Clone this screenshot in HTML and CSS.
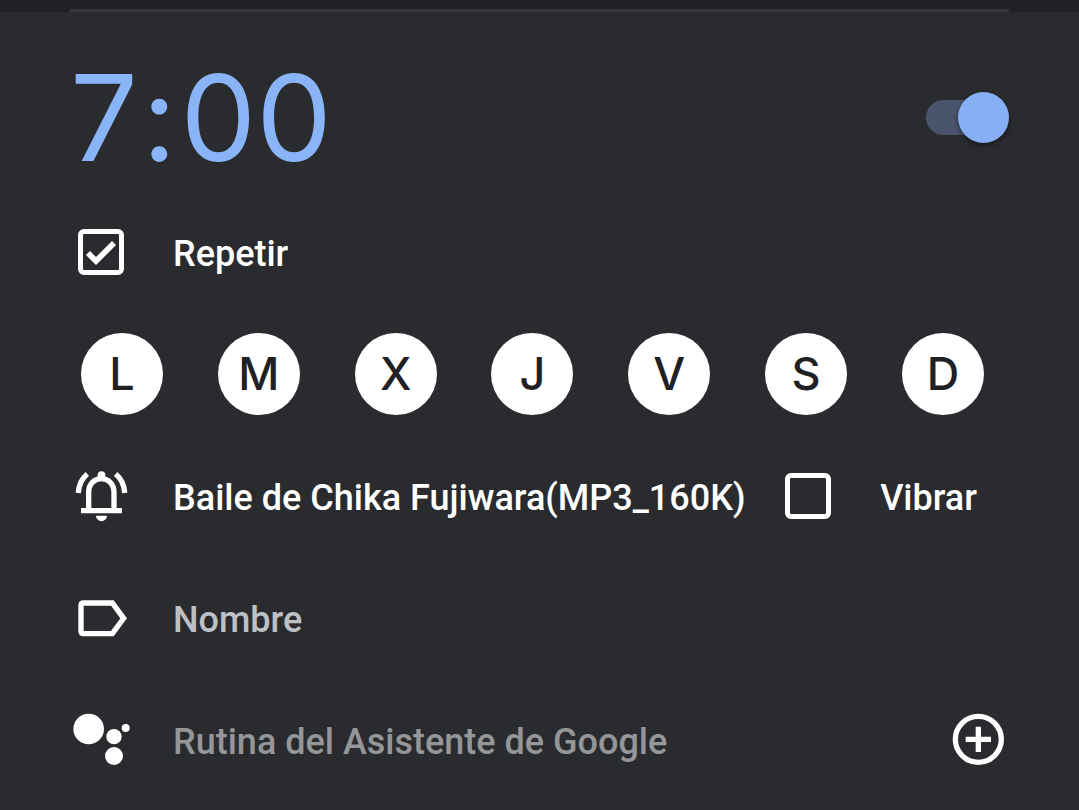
FILE: index.html
```html
<!DOCTYPE html>
<html lang="es">
<head>
    <meta charset="utf-8">
    <meta name="viewport" content="width=device-width, initial-scale=1">
    <title>Alarma</title>
    <link rel="stylesheet" href="styles.css">
</head>
<body>
    <div class="divider"><hr></div>
    <main class="alarm">
        <div class="time-row">
            <button type="button" class="time">7<span class="colon">:</span>00</button>
            <input type="checkbox" class="switch" role="switch" aria-label="Alarma" checked>
        </div>

        <div class="row">
            <input type="checkbox" class="check" id="repeat" checked>
            <label class="text" for="repeat">Repetir</label>
        </div>

        <div class="days">
            <button type="button" class="day">L</button>
            <button type="button" class="day">M</button>
            <button type="button" class="day">X</button>
            <button type="button" class="day">J</button>
            <button type="button" class="day">V</button>
            <button type="button" class="day">S</button>
            <button type="button" class="day">D</button>
        </div>

        <div class="row sound">
            <button type="button" class="item">
                <svg class="icon" viewBox="30 15 186 186">
                    <g fill="none" stroke="currentColor" stroke-width="16">
                        <path d="M86 150V97C86 72 103 56 124 56S162 72 162 97V150"/>
                        <path d="M63 152H186"/>
                        <path d="M82 42Q57 62 55 99"/>
                        <path d="M167 42Q192 62 194 99"/>
                    </g>
                    <path fill="currentColor" d="M113 58V45a11.500 11.500 0 0 1 23 0V58zM108 167H141a16.500 16.500 0 0 1-33 0z"/>
                </svg>
                <span class="text">Baile de Chika Fujiwara(MP3_160K)</span>
            </button>
            <div class="item vibrate">
                <input type="checkbox" class="check" id="vibrate">
                <label class="text" for="vibrate">Vibrar</label>
            </div>
        </div>

        <div class="row">
            <label for="name" aria-label="Nombre">
                <svg class="icon" viewBox="30 381 186 186">
                    <path fill="none" stroke="currentColor" stroke-width="16" d="M70 429H157L191 475L157 521H70Q63 521 63 514V436Q63 429 70 429Z"/>
                </svg>
            </label>
            <input type="text" class="text name" id="name" placeholder="Nombre">
        </div>

        <div class="row">
            <svg class="icon" viewBox="30 27 186 186" fill="currentColor">
                <circle cx="86" cy="87" r="46"/>
                <circle cx="162" cy="110" r="23"/>
                <circle cx="197" cy="84" r="12"/>
                <circle cx="162" cy="168" r="27"/>
            </svg>
            <span class="text muted">Rutina del Asistente de Google</span>
            <button type="button" class="add" aria-label="Añadir rutina">
                <svg class="icon" viewBox="51 27 186 186" fill="none" stroke="currentColor" stroke-width="16">
                    <circle cx="145" cy="118" r="69"/>
                    <path d="M107 118H183M145 80V156"/>
                </svg>
            </button>
        </div>
    </main>
</body>
</html>
```

FILE: styles.css
```css
*{
    box-sizing:border-box;
}
body{
    margin:0;
    background-color:#2a2b2f;
    color:white;
    font:500 36px/42px Roboto, sans-serif;
}
button,input{
    margin:0;
    padding:0;
    border:0;
    background:none;
    color:inherit;
    font:inherit;
}
button,label{
    cursor:pointer;
}
.divider{
    padding:9px 70px 0;
    background-color:#202124;
}
.divider hr{
    height:3px;
    margin:0;
    border:0;
    background-color:#36373b;
}
.alarm{
    padding:0 70px;
}
.time-row{
    display:flex;
    align-items:center;
    justify-content:space-between;
    height:179px;
    padding-top:32px;
}
.time{
    color:#8ab4f8;
    font:400 120px/140px Inter, sans-serif;
}
.colon{
    padding:0 4px;
}
.switch{
    appearance:none;
    display:grid;
    align-items:center;
    width:83px;
    height:52px;
}
.switch::before,.switch::after{
    content:"";
    grid-area:1 / 1;
}
.switch::before{
    width:68px;
    height:35px;
    border-radius:18px;
    background-color:#4a556d;
}
.switch::after{
    justify-self:end;
    width:51px;
    height:51px;
    border-radius:50%;
    background-color:#87aff3;
    box-shadow:0 2px 5px rgba(0,0,0,0.5);
}
.row,.item{
    display:flex;
    align-items:center;
    gap:41px;
}
.row{
    height:122px;
}
.text{
    padding-top:4px;
    white-space:nowrap;
}
.icon{
    display:block;
    flex:none;
    width:62px;
    height:62px;
}
.check{
    appearance:none;
    flex:none;
    width:46px;
    height:46px;
    margin:0 8px;
    border:5px solid white;
    border-radius:6px;
}
.check:checked::before{
    content:"";
    display:block;
    height:36px;
    background-color:white;
    clip-path:polygon(3px 21px, 7px 17px, 13px 23px, 29px 7px, 33px 11px, 13px 31px);
}
.days{
    display:flex;
    align-items:center;
    justify-content:space-between;
    height:122px;
    padding:0 25px 0 11px;
}
.day{
    width:82px;
    height:82px;
    border-radius:50%;
    background-color:white;
    color:#202124;
    font:500 45px/46px Inter, sans-serif;
}
.sound{
    justify-content:space-between;
    gap:0;
}
.vibrate{
    padding-right:32px;
}
.name{
    flex:1;
    min-width:0;
    outline:none;
}
.name::placeholder{
    color:#bdc1c6;
    opacity:1;
}
.muted{
    color:#959698;
}
.add{
    margin-left:auto;
}
```
